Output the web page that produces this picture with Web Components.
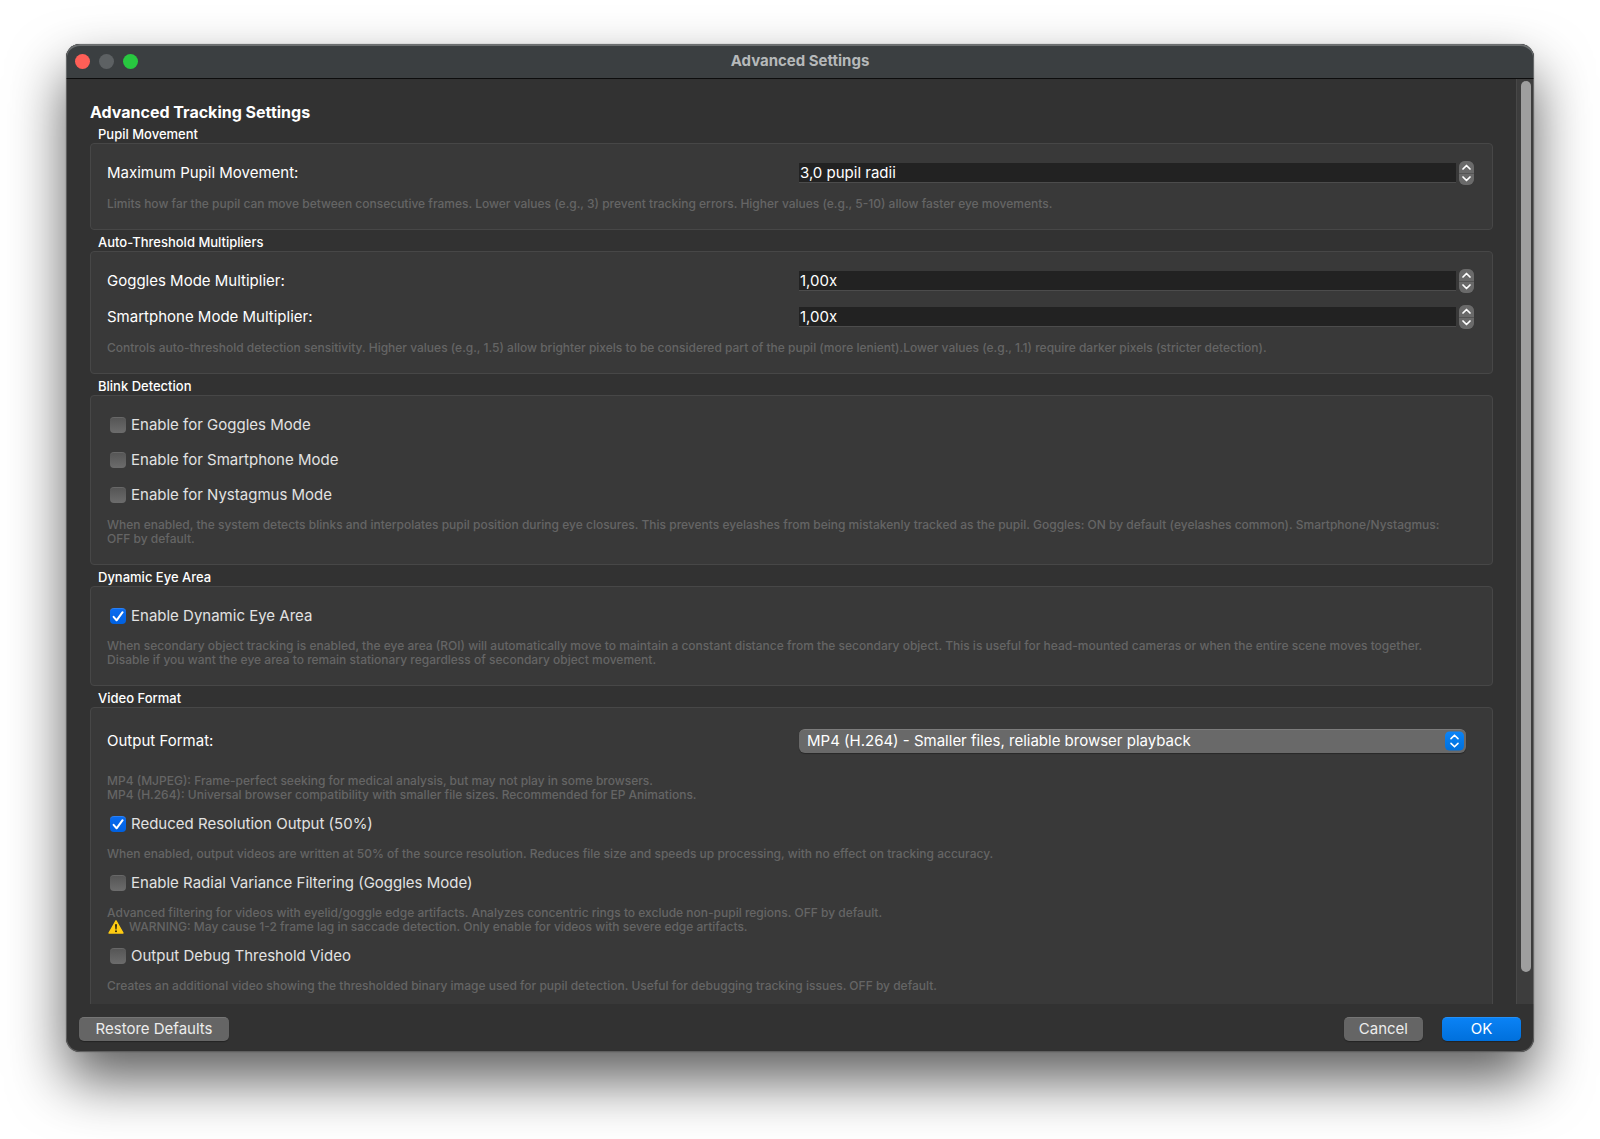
<!DOCTYPE html>
<html lang="en">
<head>
<meta charset="utf-8">
<title>Advanced Settings</title>
<style>
  html, body { height: 100%; margin: 0; }
  body {
    box-sizing: border-box;
    padding: 44px 66px 87px;
    background: #fff;
    overflow: hidden;
    font-family: Inter, "Liberation Sans", sans-serif;
    font-size: 15px;
    color: #fff;
  }
</style>
</head>
<body>
<settings-window heading="Advanced Settings">
  <settings-title>Advanced Tracking Settings</settings-title>

  <settings-group heading="Pupil Movement">
    <settings-option>
      <spin-field label="Maximum Pupil Movement:" value="3,0 pupil radii"></spin-field>
      <hint-text>Limits how far the pupil can move between consecutive frames. Lower values (e.g., 3) prevent tracking errors. Higher values (e.g., 5-10) allow faster eye movements.</hint-text>
    </settings-option>
  </settings-group>

  <settings-group heading="Auto-Threshold Multipliers">
    <settings-option>
      <spin-field label="Goggles Mode Multiplier:" value="1,00x"></spin-field>
      <spin-field label="Smartphone Mode Multiplier:" value="1,00x"></spin-field>
      <hint-text>Controls auto-threshold detection sensitivity. Higher values (e.g., 1.5) allow brighter pixels to be considered part of the pupil (more lenient).Lower values (e.g., 1.1) require darker pixels (stricter detection).</hint-text>
    </settings-option>
  </settings-group>

  <settings-group heading="Blink Detection">
    <settings-option>
      <check-field label="Enable for Goggles Mode"></check-field>
      <check-field label="Enable for Smartphone Mode"></check-field>
      <check-field label="Enable for Nystagmus Mode"></check-field>
      <hint-text>When enabled, the system detects blinks and interpolates pupil position during eye closures. This prevents eyelashes from being mistakenly tracked as the pupil. Goggles: ON by default (eyelashes common). Smartphone/Nystagmus:<br>OFF by default.</hint-text>
    </settings-option>
  </settings-group>

  <settings-group heading="Dynamic Eye Area">
    <settings-option>
      <check-field label="Enable Dynamic Eye Area" checked></check-field>
      <hint-text>When secondary object tracking is enabled, the eye area (ROI) will automatically move to maintain a constant distance from the secondary object. This is useful for head-mounted cameras or when the entire scene moves together.<br>Disable if you want the eye area to remain stationary regardless of secondary object movement.</hint-text>
    </settings-option>
  </settings-group>

  <settings-group heading="Video Format">
    <settings-option>
      <select-field label="Output Format:" value="MP4 (H.264) - Smaller files, reliable browser playback"></select-field>
      <hint-text>MP4 (MJPEG): Frame-perfect seeking for medical analysis, but may not play in some browsers.<br>MP4 (H.264): Universal browser compatibility with smaller file sizes. Recommended for EP Animations.</hint-text>
    </settings-option>
    <settings-option>
      <check-field label="Reduced Resolution Output (50%)" checked></check-field>
      <hint-text>When enabled, output videos are written at 50% of the source resolution. Reduces file size and speeds up processing, with no effect on tracking accuracy.</hint-text>
    </settings-option>
    <settings-option>
      <check-field label="Enable Radial Variance Filtering (Goggles Mode)"></check-field>
      <hint-text>Advanced filtering for videos with eyelid/goggle edge artifacts. Analyzes concentric rings to exclude non-pupil regions. OFF by default.<br><warning-icon></warning-icon>WARNING: May cause 1-2 frame lag in saccade detection. Only enable for videos with severe edge artifacts.</hint-text>
    </settings-option>
    <settings-option>
      <check-field label="Output Debug Threshold Video"></check-field>
      <hint-text>Creates an additional video showing the thresholded binary image used for pupil detection. Useful for debugging tracking issues. OFF by default.</hint-text>
    </settings-option>
  </settings-group>

  <push-button slot="footer-start" wide>Restore Defaults</push-button>
  <push-button slot="footer-end">Cancel</push-button>
  <push-button slot="footer-end" primary>OK</push-button>
</settings-window>

<script>
class BaseElement extends HTMLElement {
  connectedCallback() {
    if (this.shadowRoot) return;
    this.attachShadow({ mode: "open" }).innerHTML = this.render();
  }
  attr(name) { return this.getAttribute(name) || ""; }
}

customElements.define("settings-window", class extends BaseElement {
  render() {
    return `
    <style>
      :host {
        display: flex; flex-direction: column; box-sizing: border-box; height: 100%;
        border-radius: 14px; overflow: hidden; background: #323232; position: relative;
        box-shadow: 0 28px 56px rgba(0,0,0,.63), 0 0 1px rgba(0,0,0,.6);
      }
      /* light rim that macOS draws over the window edge */
      :host::after {
        content: ""; position: absolute; inset: 0; border-radius: 14px; pointer-events: none;
        border: 1px solid rgba(255,255,255,.22); border-top: 2px solid rgba(255,255,255,.25);
      }
      header {
        flex: none; display: grid; grid-template-columns: 1fr auto 1fr; align-items: center;
        height: 34px; padding: 0 9px; background: #3b3f41; border-bottom: 1px solid #0d0d0d;
      }
      .lights { display: flex; gap: 9px; }
      .lights button { width: 15px; height: 15px; padding: 0; border: 0; border-radius: 50%; }
      .close { background: #ff5f57; } .min { background: #5d6163; } .zoom { background: #28c840; }
      h1 { margin: 0; font-size: 15px; line-height: 20px; font-weight: 700; color: #b6b9ba; }
      .body { flex: 1; min-height: 0; display: flex; }
      main { flex: 1; min-width: 0; overflow: hidden; padding: 23px 23px 0 24px; }
      .track {
        flex: none; box-sizing: border-box; width: 18px; padding: 2px 3px 32px 4px;
        background: #3d3d3d; border-left: 1px solid #484848;
      }
      .thumb { height: 100%; border-radius: 5px; background: #9e9e9e; }
      footer { flex: none; display: flex; align-items: center; justify-content: space-between; padding: 13px 13px 11px; }
      .end { display: flex; gap: 19px; }
    </style>
    <header>
      <div class="lights">
        <button class="close" aria-label="Close"></button>
        <button class="min" aria-label="Minimize" disabled></button>
        <button class="zoom" aria-label="Zoom"></button>
      </div>
      <h1>${this.attr("heading")}</h1>
    </header>
    <div class="body">
      <main><slot></slot></main>
      <div class="track"><div class="thumb"></div></div>
    </div>
    <footer>
      <slot name="footer-start"></slot>
      <div class="end"><slot name="footer-end"></slot></div>
    </footer>`;
  }
});

customElements.define("settings-title", class extends BaseElement {
  render() {
    return `
    <style>
      :host { display: block; }
      h2 { margin: 0; font-size: 16px; line-height: 20px; font-weight: 700; }
    </style>
    <h2><slot></slot></h2>`;
  }
});

customElements.define("settings-group", class extends BaseElement {
  render() {
    return `
    <style>
      :host { display: block; }
      h3 { margin: 0; padding: 3px 8px 0; font-size: 13px; line-height: 18px; font-weight: 500; }
      .box {
        display: flex; flex-direction: column; gap: 10px; padding: 17px 16px 18px;
        background: #393939; border: 1px solid #474747; border-radius: 4px;
      }
    </style>
    <section>
      <h3>${this.attr("heading")}</h3>
      <div class="box"><slot></slot></div>
    </section>`;
  }
});

customElements.define("settings-option", class extends BaseElement {
  render() {
    return `
    <style>:host { display: flex; flex-direction: column; gap: 12px; }</style>
    <slot></slot>`;
  }
});

customElements.define("hint-text", class extends BaseElement {
  render() {
    return `
    <style>:host { display: block; font-size: 12px; line-height: 14px; font-weight: 500; color: #656565; }</style>
    <slot></slot>`;
  }
});

customElements.define("warning-icon", class extends BaseElement {
  render() {
    return `
    <style>
      :host { display: inline-block; width: 22px; height: 14px; vertical-align: top; }
      svg { display: block; margin-left: 1px; }
    </style>
    <svg width="16" height="14" viewBox="0 0 16 14" aria-hidden="true">
      <path d="M8 .8 15 13H1z" fill="#ffcc12" stroke="#ffcc12" stroke-width="1.4" stroke-linejoin="round"/>
      <path d="M7 4.2h2L8.6 9.4H7.4z" fill="#2b2410"/>
      <circle cx="8" cy="11.3" r="1" fill="#2b2410"/>
    </svg>`;
  }
});

customElements.define("spin-field", class extends BaseElement {
  render() {
    return `
    <style>
      :host { display: grid; grid-template-columns: 1fr 1fr; column-gap: 15px; align-items: center; height: 24px; }
      label { line-height: 20px; }
      .field { display: flex; align-items: center; gap: 3px; padding-right: 2px; }
      input {
        flex: 1; min-width: 0; box-sizing: border-box; height: 20px; margin: 0; padding: 0 1px;
        border: 0; border-bottom: 1px solid #4c4c4c; border-radius: 0; outline: 0;
        background: #222; color: #fff; font: inherit;
      }
      .steps { flex: none; display: flex; flex-direction: column; width: 15px; height: 24px; border-radius: 6px; overflow: hidden; background: #555; gap: 1px; }
      .steps button { flex: 1; display: flex; align-items: center; justify-content: center; padding: 0; border: 0; background: #6a6a6a; }
    </style>
    <label for="f">${this.attr("label")}</label>
    <div class="field">
      <input id="f" type="text" value="${this.attr("value")}">
      <div class="steps">
        <button aria-label="Increase"><svg width="9" height="6" viewBox="0 0 9 6"><path d="M1 5 4.5 1.5 8 5" fill="none" stroke="#fff" stroke-width="1.7" stroke-linecap="round" stroke-linejoin="round"/></svg></button>
        <button aria-label="Decrease"><svg width="9" height="6" viewBox="0 0 9 6"><path d="M1 1 4.5 4.5 8 1" fill="none" stroke="#fff" stroke-width="1.7" stroke-linecap="round" stroke-linejoin="round"/></svg></button>
      </div>
    </div>`;
  }
});

customElements.define("select-field", class extends BaseElement {
  render() {
    return `
    <style>
      :host { display: grid; grid-template-columns: 1fr 1fr; column-gap: 15px; align-items: center; padding: 4px 0 9px; }
      label { line-height: 20px; }
      .field { position: relative; display: flex; padding-right: 10px; }
      select {
        appearance: none; flex: 1; min-width: 0; height: 24px; margin: 0; padding: 0 32px 2px 8px;
        border: 0; border-top: 1px solid #7c7c7c; border-radius: 6px; background: #696969;
        box-shadow: 0 1px 1px rgba(0,0,0,.3); color: #fff; font: inherit;
      }
      svg { position: absolute; right: 12px; top: 2px; pointer-events: none; }
    </style>
    <label for="f">${this.attr("label")}</label>
    <div class="field">
      <select id="f"><option>${this.attr("value")}</option></select>
      <svg width="19" height="20" viewBox="0 0 19 20" aria-hidden="true">
        <defs><linearGradient id="g" x2="0" y2="1"><stop stop-color="#0b84f8"/><stop offset="1" stop-color="#0070dc"/></linearGradient></defs>
        <rect width="19" height="19" y=".5" rx="4.5" fill="url(#g)"/>
        <path d="M6 7.6 9.5 4.2 13 7.6M6 12.4 9.5 15.8 13 12.4" fill="none" stroke="#fff" stroke-width="1.6" stroke-linecap="round" stroke-linejoin="round"/>
      </svg>
    </div>`;
  }
});

customElements.define("check-field", class extends BaseElement {
  render() {
    return `
    <style>
      :host { display: flex; align-items: center; height: 23px; padding-left: 3px; color: #e2e2e2; }
      label { display: flex; align-items: center; gap: 5px; line-height: 20px; }
      .mark { display: grid; }
      .mark > * { grid-area: 1 / 1; }
      input {
        appearance: none; box-sizing: border-box; width: 16px; height: 16px; margin: 0; border-radius: 4px;
        background: linear-gradient(#565656, #6c6c6c); border-top: 1px solid #686868;
      }
      input:checked { background: linear-gradient(#0a6cf0, #0060df); border-top-color: #2a80f5; }
      svg { display: none; pointer-events: none; }
      input:checked + svg { display: block; }
    </style>
    <label>
      <span class="mark">
        <input type="checkbox" ${this.hasAttribute("checked") ? "checked" : ""}>
        <svg width="16" height="16" viewBox="0 0 16 16" aria-hidden="true"><path d="M3.6 8.8 6.6 12.3 12.6 4.2" fill="none" stroke="#fff" stroke-width="2" stroke-linecap="round" stroke-linejoin="round"/></svg>
      </span>
      <span>${this.attr("label")}</span>
    </label>`;
  }
});

customElements.define("push-button", class extends BaseElement {
  render() {
    return `
    <style>
      :host { display: block; }
      button {
        display: block; min-width: 79px; height: 24px; padding: 0 15px 2px; border: 0; border-top: 1px solid #757575;
        border-radius: 5px; background: #656565; box-shadow: 0 1px 1px rgba(0,0,0,.3);
        color: #ececec; font: inherit; line-height: 20px;
      }
      :host([wide]) button { min-width: 150px; }
      :host([primary]) button { background: linear-gradient(#0a82f5, #0070dc); border-top-color: #2390f8; color: #fff; }
    </style>
    <button><slot></slot></button>`;
  }
});
</script>
</body>
</html>
